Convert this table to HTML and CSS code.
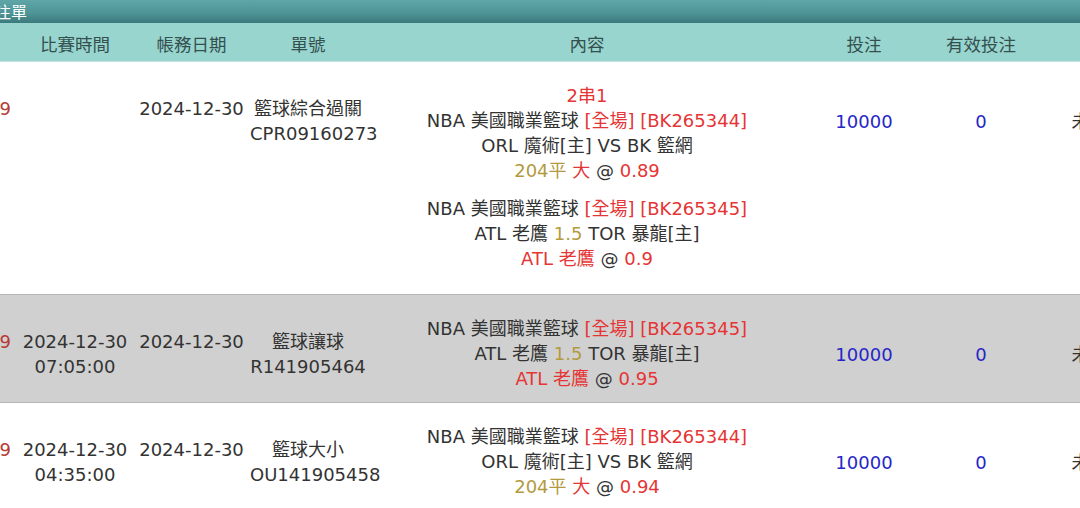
FILE: index.html
```html
<!DOCTYPE html>
<html lang="zh-Hant">
<head>
<meta charset="utf-8">
<title>注單</title>
<link rel="stylesheet" href="styles.css">
</head>
<body>
<div class="screen">
  <div class="sheet">
    <div class="titlebar">注單</div>
    <table class="bets">
      <colgroup>
        <col class="col-id"><col class="col-time"><col class="col-date"><col class="col-no">
        <col class="col-content"><col class="col-stake"><col class="col-valid"><col class="col-status">
      </colgroup>
      <thead>
        <tr>
          <th>序號</th><th>比賽時間</th><th>帳務日期</th><th>單號</th>
          <th>內容</th><th>投注</th><th>有效投注</th><th class="th-status">狀態</th>
        </tr>
      </thead>
      <tbody>
        <tr class="row">
          <td class="cell-top id">100159</td>
          <td class="cell-top"></td>
          <td class="cell-top">2024-12-30</td>
          <td class="cell-top">籃球綜合過關<br>CPR09160273</td>
          <td class="content">
            <div class="line red">2串1</div>
            <div class="bet">
              <div class="line">NBA 美國職業籃球 <span class="red">[全場] [BK265344]</span></div>
              <div class="line">ORL 魔術[主] VS BK 籃網</div>
              <div class="line"><span class="gold">204平</span> <span class="red">大</span> @ <span class="red">0.89</span></div>
            </div>
            <div class="bet gap">
              <div class="line">NBA 美國職業籃球 <span class="red">[全場] [BK265345]</span></div>
              <div class="line">ATL 老鷹 <span class="gold">1.5</span> TOR 暴龍[主]</div>
              <div class="line"><span class="red">ATL 老鷹</span> @ <span class="red">0.9</span></div>
            </div>
          </td>
          <td class="cell-amt blue">10000</td>
          <td class="cell-amt blue">0</td>
          <td class="cell-amt status">未結算</td>
        </tr>
        <tr class="row alt">
          <td class="cell-top id">100149</td>
          <td class="cell-top">2024-12-30<br>07:05:00</td>
          <td class="cell-top">2024-12-30</td>
          <td class="cell-top">籃球讓球<br>R141905464</td>
          <td class="content">
            <div class="bet">
              <div class="line">NBA 美國職業籃球 <span class="red">[全場] [BK265345]</span></div>
              <div class="line">ATL 老鷹 <span class="gold">1.5</span> TOR 暴龍[主]</div>
              <div class="line"><span class="red">ATL 老鷹</span> @ <span class="red">0.95</span></div>
            </div>
          </td>
          <td class="cell-amt blue">10000</td>
          <td class="cell-amt blue">0</td>
          <td class="cell-amt status">未結算</td>
        </tr>
        <tr class="row">
          <td class="cell-top id">100139</td>
          <td class="cell-top">2024-12-30<br>04:35:00</td>
          <td class="cell-top">2024-12-30</td>
          <td class="cell-top">籃球大小<br>OU141905458</td>
          <td class="content">
            <div class="bet">
              <div class="line">NBA 美國職業籃球 <span class="red">[全場] [BK265344]</span></div>
              <div class="line">ORL 魔術[主] VS BK 籃網</div>
              <div class="line"><span class="gold">204平</span> <span class="red">大</span> @ <span class="red">0.94</span></div>
            </div>
          </td>
          <td class="cell-amt blue">10000</td>
          <td class="cell-amt blue">0</td>
          <td class="cell-amt status">未結算</td>
        </tr>
      </tbody>
    </table>
  </div>
</div>
</body>
</html>
```

FILE: styles.css
```css
html, body {
  margin: 0;
  padding: 0;
  background: #ffffff;
}

.screen {
  width: 1080px;
  height: 508px;
  overflow: hidden;
}

.sheet {
  width: 1219px;
  margin-left: -64px;
}

.titlebar {
  height: 23px;
  line-height: 23px;
  padding-left: 59px;
  color: #ffffff;
  font-family: "Noto Sans CJK TC", "Noto Sans", sans-serif;
  font-size: 16px;
  background: linear-gradient(to bottom, #5fa6a8 0%, #4f9598 55%, #3b7a7c 100%);
}

.bets {
  width: 1219px;
  table-layout: fixed;
  border-collapse: separate;
  border-spacing: 0;
  font-family: "DejaVu Sans", "Noto Sans CJK TC", sans-serif;
  font-size: 18px;
  line-height: 25px;
  color: #333333;
}

.col-id { width: 81px; }
.col-time { width: 116px; }
.col-date { width: 117px; }
.col-no { width: 116px; }
.col-content { width: 442px; }
.col-stake { width: 112px; }
.col-valid { width: 122px; }
.col-status { width: 113px; }

.bets th {
  background: #98d5cf;
  color: #34504e;
  font-family: "Noto Sans CJK TC", "Noto Sans", sans-serif;
  font-weight: normal;
  font-size: 17.5px;
  line-height: 25px;
  padding: 8px 0 5px;
  border-bottom: 1px solid #c3e4e0;
  text-align: center;
  white-space: nowrap;
}

.bets th.th-status {
  padding-left: 10px;
}

.bets td {
  padding: 0;
  text-align: center;
  white-space: nowrap;
  border-bottom: 1px solid #b6b6b6;
}

.row.alt td {
  background: #d0d0d0;
}

.cell-top {
  vertical-align: top;
  padding-top: 34px !important;
}

.cell-amt {
  vertical-align: top;
  padding-top: 47px !important;
}

.content {
  vertical-align: top;
  padding: 21px 0 11px !important;
}

.row:first-child .content {
  padding-bottom: 23px !important;
}

.bet.gap {
  margin-top: 13px;
}

.line {
  height: 25px;
}

.id { color: #b83a36; }
.red { color: #e53535; }
.gold { color: #b39a3e; }
.blue { color: #2626c8; }
.status { color: #333333; }
```
